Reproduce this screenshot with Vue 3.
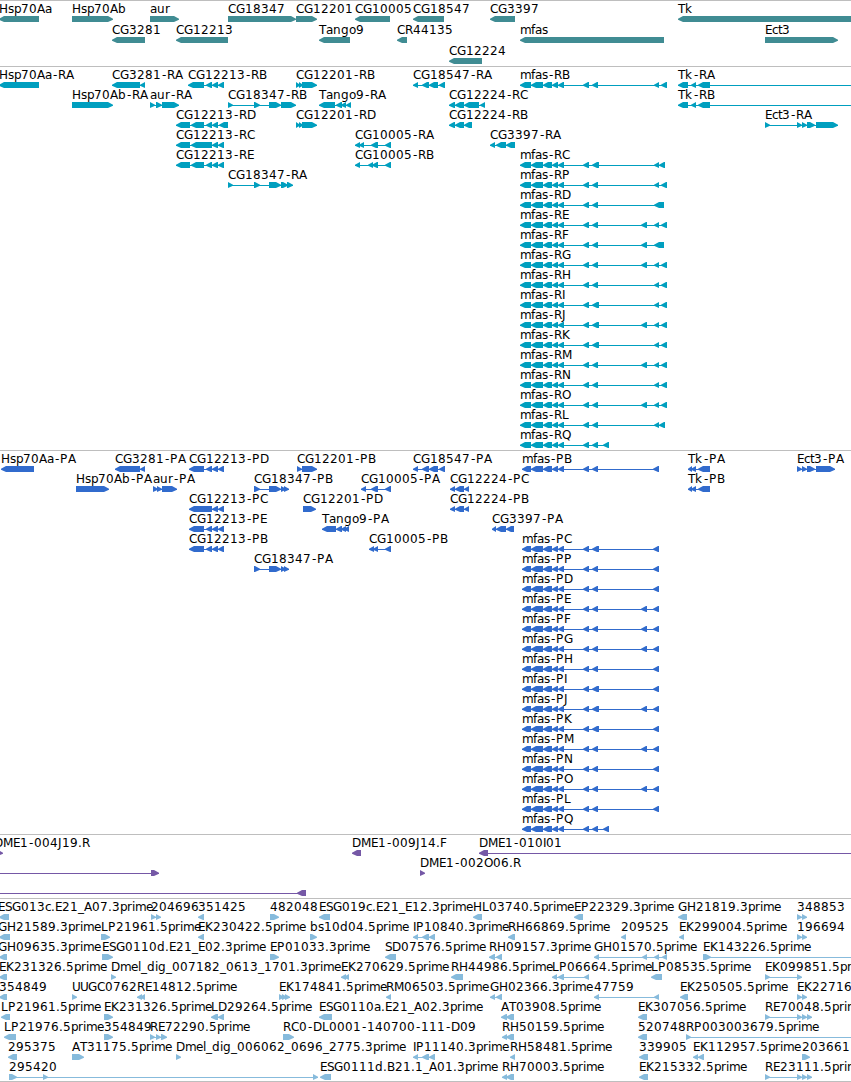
<script setup>
const WIDTH = 851;

// Advance of each glyph in px, labels are set on whole pixels
const ADVANCE = {
    ' ': 4, '.': 4, '-': 6, '_': 6,
    A: 8, B: 8, C: 8, D: 9, E: 7, F: 7, G: 9, H: 9, I: 3, J: 4, K: 8, L: 7, M: 10,
    N: 9, O: 9, P: 8, Q: 9, R: 8, S: 7, T: 7, U: 8,
    a: 7, c: 6, e: 7, f: 4, i: 3, k: 8, l: 3, m: 11, o: 7, p: 7, r: 5, s: 6, t: 4, u: 8
};

const glyphX = (name, x) => {
    let pos = x;
    return [...name].map(ch => {
        // hyphens sit in the middle of their cell
        const current = ch === '-' ? pos + 1 : pos;
        pos += ADVANCE[ch] ?? 8;
        return current;
    }).join(' ');
};

// end is only given when the line runs on past the last exon
const f = (name, x, dir, exons, end) => ({ name, x, dir, exons, end });

const cg18547 = [[413, 418], [422, 429], [429, 438], [439, 445]];
const tk = [[678, 688], [691, 696], [698, 710]];
const ip = [[413, 418], [422, 429], [429, 435]];
const rh = [[502, 507], [506, 514]];
const re = [[765, 770], [797, 802], [802, 807], [807, 812]];
const pair = [[797, 802], [802, 807]];
const tail = [[212, 218], [218, 224]];
const pd = [[189, 204], [206, 212], ...tail];
const mid = [[531, 543], [543, 552], [552, 558], [558, 564], [583, 589]];

const mfasR = (id) => {
    const exons = [[520, 531], ...mid, [592, 'CIJK'.includes(id) ? 599 : 598]];
    if (id === 'Q') return [...exons, [603, 609]];
    if ('EFGJMO'.includes(id)) exons.push([641, 647]);
    if ('DF'.includes(id)) return [...exons, [654, 664]];
    return [...exons, [654, 659], 'CL'.includes(id) ? [659, 665] : [661, 667]];
};

const mfasP = (id) => {
    const exons = [[522, 531], ...mid, [592, 'CIJK'.includes(id) ? 599 : 598]];
    if (id === 'Q') return [...exons, [603, 609]];
    if ('EFGJMO'.includes(id)) exons.push([641, 647]);
    return [...exons, [653, 659]];
};

const mR = (id) => f(`mfas-R${id}`, 520, 'L', mfasR(id));
const mP = (id) => f(`mfas-P${id}`, 522, 'L', mfasP(id));
const isoforms = [...'DEFGHIJKMNOLQ'];

const tracks = [
    {
        id: 'genes', height: 66, pitch: 21, rows: [
            [
                f('Hsp70Aa', -1, 'L', [[-1, 39]]),
                f('Hsp70Ab', 72, 'R', [[72, 113]]),
                f('aur', 150, 'R', [[150, 179]]),
                f('CG18347', 228, 'R', [[228, 296]]),
                f('CG12201', 296, 'R', [[296, 317]]),
                f('CG10005', 355, 'L', [[355, 390]]),
                f('CG18547', 413, 'L', [[413, 444]]),
                f('CG3397', 490, 'L', [[490, 515]]),
                f('Tk', 678, 'L', [[678, 860]])
            ],
            [
                f('CG3281', 112, 'L', [[112, 145]]),
                f('CG12213', 176, 'L', [[176, 228]]),
                f('Tango9', 319, 'L', [[319, 350]]),
                f('CR44135', 397, 'L', [[397, 407]]),
                f('mfas', 520, 'L', [[520, 664]]),
                f('Ect3', 765, 'R', [[765, 838]])
            ],
            [f('CG12224', 449, 'L', [[449, 482]])]
        ]
    },
    {
        id: 'transcripts', height: 384, pitch: 20, rows: [
            [
                f('Hsp70Aa-RA', -1, 'L', [[-1, 39]]),
                f('CG3281-RA', 112, 'L', [[112, 140], [140, 145]]),
                f('CG12213-RB', 188, 'L', [[188, 204], [206, 212], ...tail]),
                f('CG12201-RB', 296, 'R', [[296, 300], [299, 303], [302, 317]]),
                f('CG18547-RA', 413, 'L', cg18547),
                mR('B'),
                f('Tk-RA', 678, 'L', tk, WIDTH)
            ],
            [
                f('Hsp70Ab-RA', 72, 'R', [[72, 113]]),
                f('aur-RA', 150, 'R', [[150, 155], [156, 162], [162, 179]]),
                f('CG18347-RB', 228, 'R', [[228, 233], [254, 260], [269, 281], [281, 296]]),
                f('Tango9-RA', 319, 'L', [[319, 335], [336, 342], [341, 346], [346, 351]]),
                f('CG12224-RC', 449, 'L', [[449, 455], [455, 464], [464, 479], [480, 485]]),
                f('Tk-RB', 678, 'L', tk, WIDTH)
            ],
            [
                f('CG12213-RD', 176, 'L', [[176, 190], [191, 204], [206, 212], [212, 218], [219, 228]]),
                f('CG12201-RD', 296, 'R', [[296, 300], [299, 303], [302, 317]]),
                f('CG12224-RB', 449, 'L', [[449, 455], [455, 464], [464, 472]]),
                f('Ect3-RA', 765, 'R', [[765, 770], [797, 802], [802, 807], [807, 815], [816, 838]])
            ],
            [
                f('CG12213-RC', 176, 'L', [[176, 190], [191, 212], ...tail]),
                f('CG10005-RA', 355, 'L', [[355, 360], [359, 364], [371, 378], [385, 391]]),
                f('CG3397-RA', 490, 'L', [[490, 495], [496, 506], [506, 515]])
            ],
            [
                f('CG12213-RE', 176, 'L', [[176, 190], [191, 204], [206, 212], ...tail]),
                f('CG10005-RB', 355, 'L', [[355, 360], [368, 373], [372, 378], [385, 391]]),
                mR('C')
            ],
            [
                f('CG18347-RA', 228, 'R', [[228, 233], [254, 260], [269, 281], [281, 288], [287, 293]]),
                mR('P')
            ],
            ...isoforms.map(id => [mR(id)])
        ]
    },
    {
        id: 'proteins', height: 384, pitch: 20, rows: [
            [
                f('Hsp70Aa-PA', 1, 'L', [[1, 34]]),
                f('CG3281-PA', 115, 'L', [[115, 140], [140, 145]]),
                f('CG12213-PD', 189, 'L', pd),
                f('CG12201-PB', 297, 'R', [[297, 302], [302, 317]]),
                f('CG18547-PA', 413, 'L', cg18547),
                mP('B'),
                f('Tk-PA', 688, 'L', [[688, 692], [691, 696], [698, 710]]),
                f('Ect3-PA', 797, 'R', [[797, 802], [802, 807], [807, 815], [816, 835]])
            ],
            [
                f('Hsp70Ab-PA', 76, 'R', [[76, 109]]),
                f('aur-PA', 153, 'R', [[153, 158], [157, 162], [162, 177]]),
                f('CG18347-PB', 254, 'R', [[254, 260], [269, 281], [281, 286], [284, 289]]),
                f('CG10005-PA', 361, 'L', [[361, 366], [371, 378], [385, 391]]),
                f('CG12224-PC', 450, 'L', [[450, 455], [455, 464], [464, 469]]),
                f('Tk-PB', 688, 'L', [[688, 692], [691, 696], [698, 710]])
            ],
            [
                f('CG12213-PC', 189, 'L', [[189, 212], ...tail]),
                f('CG12201-PD', 303, 'R', [[303, 316]]),
                f('CG12224-PB', 450, 'L', [[450, 455], [455, 464], [464, 469]])
            ],
            [
                f('CG12213-PE', 189, 'L', pd),
                f('Tango9-PA', 322, 'L', [[322, 336], [336, 342], [341, 346], [344, 349]]),
                f('CG3397-PA', 492, 'L', [[492, 496], [496, 506], [506, 514]])
            ],
            [
                f('CG12213-PB', 189, 'L', pd),
                f('CG10005-PB', 369, 'L', [[369, 374], [373, 378], [385, 391]]),
                mP('C')
            ],
            [
                f('CG18347-PA', 254, 'R', [[254, 260], [269, 281], [281, 286], [284, 289]]),
                mP('P')
            ],
            ...isoforms.map(id => [mP(id)])
        ]
    },
    {
        id: 'bacs', height: 64, pitch: 20, rows: [
            [
                f('DME1-004J19.R', -6, 'R', [[-6, 3]]),
                f('DME1-009J14.F', 352, 'L', [[352, 361]]),
                f('DME1-010I01', 479, 'L', [[479, 488]], WIDTH)
            ],
            [
                f('', -10, 'R', [[-10, -5], [151, 159]]),
                f('DME1-002O06.R', 420, 'R', [[420, 425]])
            ],
            [f('', -10, 'L', [[-10, -5], [297, 306]])]
        ]
    },
    {
        id: 'ests', height: 183, pitch: 20, rows: [
            [
                f('ESG013c.E21_A07.3prime', -2, 'L', [[-1, 9]]),
                f('204696', 151, 'R', [[151, 156], [156, 161]]),
                f('351425', 198, 'L', [[198, 204]]),
                f('482048', 270, 'R', [[270, 279]]),
                f('ESG019c.E21_E12.3prime', 319, 'L', [[319, 330]]),
                f('HL03740.5prime', 473, 'L', [[473, 482]]),
                f('EP22329.3prime', 574, 'L', [[574, 583]]),
                f('GH21819.3prime', 678, 'L', [[678, 687]]),
                f('348853', 797, 'R', pair)
            ],
            [
                f('GH21589.3prime', -2, 'L', [[-1, 10]]),
                f('LP21961.5prime', 101, 'R', [[101, 110]]),
                f('EK230422.5prime', 198, 'L', [[198, 204]]),
                f('bs10d04.5prime', 310, 'R', [[310, 317]]),
                f('IP10840.3prime', 413, 'L', ip),
                f('RH66869.5prime', 508, 'L', [[508, 515]]),
                f('209525', 621, 'L', [[621, 626]]),
                f('EK299004.5prime', 679, 'L', [[679, 684]]),
                f('196694', 797, 'R', pair)
            ],
            [
                f('GH09635.3prime', -2, 'L', [[-1, 7]]),
                f('ESG0110d.E21_E02.3prime', 102, 'R', [[102, 113]]),
                f('EP01033.3prime', 270, 'R', [[270, 279]]),
                f('SD07576.5prime', 385, 'L', [[385, 396]]),
                f('RH09157.3prime', 489, 'L', [[489, 495], [496, 502]]),
                f('GH01570.5prime', 594, 'L', [[594, 599], [642, 647], [654, 659], [662, 667]]),
                f('EK143226.5prime', 703, 'R', [[703, 711]], WIDTH)
            ],
            [
                f('EK231326.5prime', -1, 'L', [[-1, 7]]),
                f('Dmel_dig_007182_0613_1701.3prime', 111, 'R', [[111, 116]]),
                f('EK270629.5prime', 341, 'L', [[341, 346], [344, 349]]),
                f('RH44986.5prime', 451, 'L', [[451, 463]]),
                f('LP06664.5prime', 552, 'L', [[552, 557], [558, 564], [584, 589]]),
                f('LP08535.5prime', 651, 'L', [[651, 662]]),
                f('EK099851.5prime', 765, 'R', [[765, 770], [797, 802]])
            ],
            [
                f('354849', -1, 'L', [[-1, 7]]),
                f('UUGC0762', 72, 'R', [[72, 77]]),
                f('RE14812.5prime', 137, 'L', [[137, 142], [140, 145]]),
                f('EK174841.5prime', 279, 'R', [[279, 284], [282, 287], [285, 290]]),
                f('RM06503.5prime', 386, 'L', [[386, 391]]),
                f('GH02366.3prime', 490, 'L', [[490, 495], [496, 502]]),
                f('47759', 594, 'L', [[594, 599], [654, 659]]),
                f('EK250505.5prime', 680, 'L', [[680, 688]]),
                f('EK22716', 797, 'R', pair)
            ],
            [
                f('LP21961.5prime', 1, 'L', [[1, 10]]),
                f('EK231326.5prime', 104, 'R', [[104, 113]]),
                f('LD29264.5prime', 211, 'L', [[211, 218], [218, 224]]),
                f('ESG0110a.E21_A02.3prime', 319, 'L', [[319, 332]]),
                f('AT03908.5prime', 501, 'L', [[501, 507], [506, 514]]),
                f('EK307056.5prime', 638, 'L', [[638, 647]]),
                f('RE70048.5prime', 765, 'R', re)
            ],
            [
                f('LP21976.5prime', 4, 'L', [[4, 16]]),
                f('354849', 104, 'R', [[104, 113]]),
                f('RE72290.5prime', 150, 'R', [[150, 155], [156, 161], [161, 167]]),
                f('RC0-DL0001-140700-111-D09', 283, 'R', [[283, 294]]),
                f('RH50159.5prime', 502, 'L', rh),
                f('520748', 638, 'L', [[638, 647]]),
                f('RP003003679.5prime', 686, 'R', [[686, 691]], WIDTH)
            ],
            [
                f('295375', 8, 'L', [[8, 17]]),
                f('AT31175.5prime', 72, 'R', [[72, 84]]),
                f('Dmel_dig_006062_0696_2775.3prime', 176, 'R', [[176, 181]]),
                f('IP11140.3prime', 413, 'L', ip),
                f('RH58481.5prime', 510, 'L', [[510, 515]]),
                f('339905', 639, 'L', [[639, 648]]),
                f('EK112957.5prime', 693, 'L', [[693, 698], [698, 704]]),
                f('203661', 802, 'R', [[802, 810]])
            ],
            [
                f('295420', 9, 'R', [[9, 17], [43, 48], [313, 318]]),
                f('ESG0111d.B21.1_A01.3prime', 320, 'L', [[320, 331]]),
                f('RH70003.5prime', 502, 'L', rh),
                f('EK215332.5prime', 639, 'L', [[639, 648]]),
                f('RE23111.5prime', 765, 'R', re)
            ]
        ]
    }
];

const rowTop = (track, row) => row * track.pitch;

// Box with an arrow head on the side it is transcribed to
const exonPath = ([x1, x2], dir, top) => {
    const y = top + 16;
    const head = Math.min(5, x2 - x1);
    if (dir === 'L') {
        const n = x1 + head;
        return `M${x1} ${y + 2.8}L${n} ${y}H${x2}V${y + 6}H${n}L${x1} ${y + 3.8}Z`;
    }
    const n = x2 - head;
    return `M${x2} ${y + 2.8}L${n} ${y}H${x1}V${y + 6}H${n}L${x2} ${y + 3.8}Z`;
};

const lineWidth = (item) => (item.end ?? item.exons[item.exons.length - 1][1]) - item.exons[0][0];
</script>

<template>
    <div class="browser">
        <section v-for="track in tracks" :key="track.id" class="track" :class="track.id">
            <svg :width="WIDTH" :height="track.height - 1" :viewBox="`0 0 ${WIDTH} ${track.height - 1}`">
                <g v-for="(row, r) in track.rows" :key="r">
                    <g v-for="item in row" :key="item.name + item.x">
                        <rect v-if="item.exons.length > 1 || item.end" class="intron" :x="item.exons[0][0]"
                            :y="rowTop(track, r) + 18" :width="lineWidth(item)" height="1" />
                        <path v-for="(exon, e) in item.exons" :key="e" class="exon"
                            :d="exonPath(exon, item.dir, rowTop(track, r) - 1)" />
                        <text v-if="item.name" :x="glyphX(item.name, item.x)" :y="rowTop(track, r) + 12">{{ item.name }}</text>
                    </g>
                </g>
            </svg>
        </section>
    </div>
</template>

<style>
body {
    margin: 0;
    background: #fff;
}
</style>

<style scoped>
.browser {
    width: 851px;
    height: 1082px;
    box-sizing: border-box;
    overflow: hidden;
    display: flex;
    flex-direction: column;
    background: #fff;
    border-bottom: 1px solid #bebebe;
}

.track {
    flex: none;
    border-top: 1px solid #bebebe;
}

.track svg {
    display: block;
}

.genes {
    fill: #408c93;
}

.transcripts {
    fill: #009fbf;
}

.proteins {
    fill: #316bcd;
}

.bacs {
    fill: #7558a6;
}

.ests {
    fill: #87bbdc;
}

.intron {
    shape-rendering: crispEdges;
}

text {
    font-family: "DejaVu Sans", sans-serif;
    font-size: 12px;
    fill: #000;
}
</style>
